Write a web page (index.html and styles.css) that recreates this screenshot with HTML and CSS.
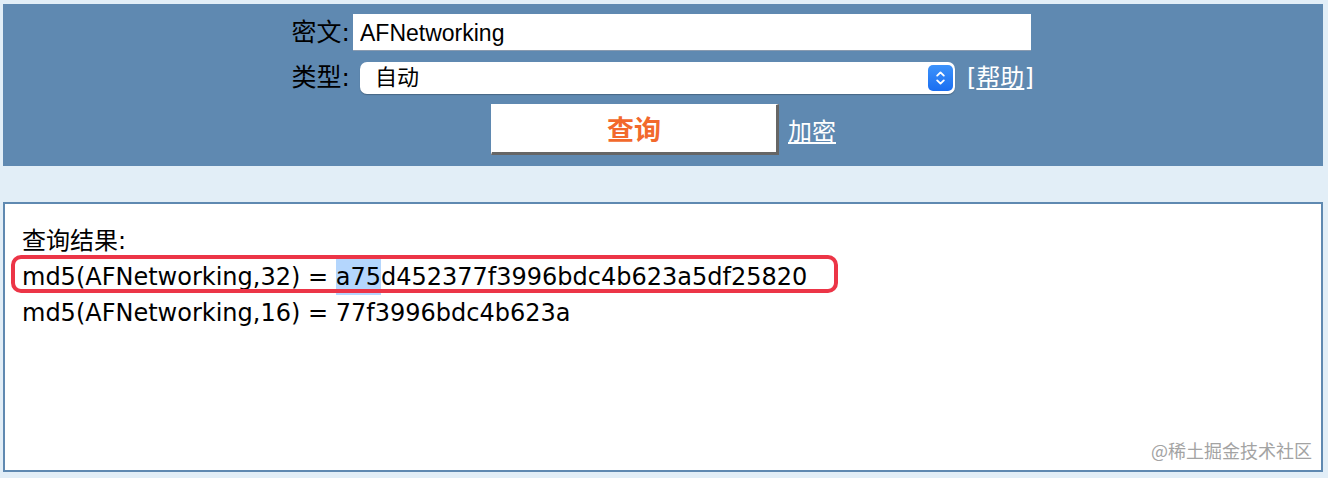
FILE: index.html
```html
<!DOCTYPE html>
<html lang="zh-CN">
<head>
    <meta charset="UTF-8">
    <title>MD5 查询</title>
    <link rel="stylesheet" href="styles.css">
</head>
<body>
    <div class="page">
        <form class="panel" id="queryForm">
            <div class="form-row">
                <label class="form-label" for="cipher">密文:</label>
                <input class="cipher-input" type="text" id="cipher" value="AFNetworking">
            </div>
            <div class="form-row">
                <span class="form-label">类型:</span>
                <div class="fake-select">
                    <span class="select-text">自动</span>
                    <svg class="select-arrows" width="25" height="26" viewBox="0 0 25 26">
                        <defs>
                            <linearGradient id="selGrad" x1="0" y1="0" x2="0" y2="1">
                                <stop offset="0" stop-color="#3d93fb"/>
                                <stop offset="1" stop-color="#1a6ef1"/>
                            </linearGradient>
                        </defs>
                        <rect width="25" height="26" rx="5" fill="url(#selGrad)"/>
                        <path d="M9.2 10.6 L12.5 7.4 L15.8 10.6" stroke="#fff" stroke-width="1.9" fill="none" stroke-linecap="round" stroke-linejoin="round"/>
                        <path d="M9.2 15.4 L12.5 18.6 L15.8 15.4" stroke="#fff" stroke-width="1.9" fill="none" stroke-linecap="round" stroke-linejoin="round"/>
                    </svg>
                </div>
                <span class="help">[<a href="#">帮助</a>]</span>
            </div>
            <div class="button-row">
                <button class="query-btn" type="submit">查询</button>
                <a class="encrypt-link" href="#">加密</a>
            </div>
        </form>

        <div class="result">
            <div class="result-line">查询结果:</div>
            <div class="result-line"><span class="marked">md5(AFNetworking,32) = <span class="selected">a75</span>d452377f3996bdc4b623a5df25820<span class="annotation"></span></span></div>
            <div class="result-line">md5(AFNetworking,16) = 77f3996bdc4b623a</div>
            <div class="watermark">@稀土掘金技术社区</div>
        </div>
    </div>
</body>
</html>
```

FILE: styles.css
```css
/* page */
body {
    margin: 0;
    background-color: #e2eef7;
    font-family: "DejaVu Sans", "Noto Sans CJK SC", sans-serif;
    color: #000;
}

.page {
    padding: 4px 5px 0 3px;
}

/* top search panel */
.panel {
    height: 162px;
    box-sizing: border-box;
    padding: 10px 0 0;
    background-color: #5f89b1;
    display: flex;
    flex-direction: column;
    gap: 11px;
}

.form-row {
    display: flex;
    align-items: center;
    padding-left: 257px;
    font-size: 24px;
    line-height: 32px;
}

.form-label {
    width: 90px;
    text-align: right;
    font-size: 25px;
}

.cipher-input {
    width: 678px;
    height: 37px;
    box-sizing: border-box;
    margin: 0 0 0 3px;
    padding: 3px 7px 0;
    border: none;
    border-bottom: 1px solid #8a9bb0;
    background: #fff;
    font-family: "Liberation Sans", "Noto Sans CJK SC", sans-serif;
    font-size: 23px;
    color: #000;
}

.fake-select {
    width: 595px;
    height: 32px;
    box-sizing: border-box;
    margin-left: 10px;
    padding: 0 2px 0 15px;
    background: #fff;
    border-radius: 7px;
    display: flex;
    align-items: center;
    justify-content: space-between;
    box-shadow: 0 1px 1px rgba(0, 0, 0, 0.25);
}

.select-text {
    font-size: 22px;
}

.help {
    margin-left: 12px;
    color: #fff;
}

.help a {
    color: #fff;
}

.button-row {
    margin-top: -1px;
    display: flex;
    justify-content: center;
    align-items: center;
    gap: 9px;
    padding-left: 1px;
}

.query-btn {
    width: 288px;
    height: 51px;
    box-sizing: border-box;
    border-style: solid;
    border-width: 1px 3px 3px 1px;
    border-color: #fff #666 #666 #fff;
    background: #fff;
    color: #f2692c;
    font-family: "Noto Sans CJK SC", sans-serif;
    font-size: 27px;
    font-weight: bold;
    padding: 0;
    cursor: pointer;
}

.encrypt-link {
    color: #fff;
    font-size: 24px;
}

/* result box */
.result {
    position: relative;
    margin-top: 36px;
    height: 270px;
    box-sizing: border-box;
    padding: 19px 17px 0 17px;
    background: #fff;
    border: 2px solid #5f89b1;
    font-size: 24px;
}

.result-line {
    line-height: 36px;
    height: 36px;
    white-space: nowrap;
}

.marked {
    position: relative;
}

.selected {
    display: inline-block;
    background-color: #b4d6fd;
}

.annotation {
    position: absolute;
    left: -11px;
    right: -31px;
    top: -8px;
    bottom: -2px;
    border: 4px solid #ec3547;
    border-radius: 10px;
}

.watermark {
    position: absolute;
    right: 9px;
    bottom: 7px;
    font-family: "Noto Sans CJK SC", sans-serif;
    font-size: 18px;
    color: #a3a3a3;
}
```
